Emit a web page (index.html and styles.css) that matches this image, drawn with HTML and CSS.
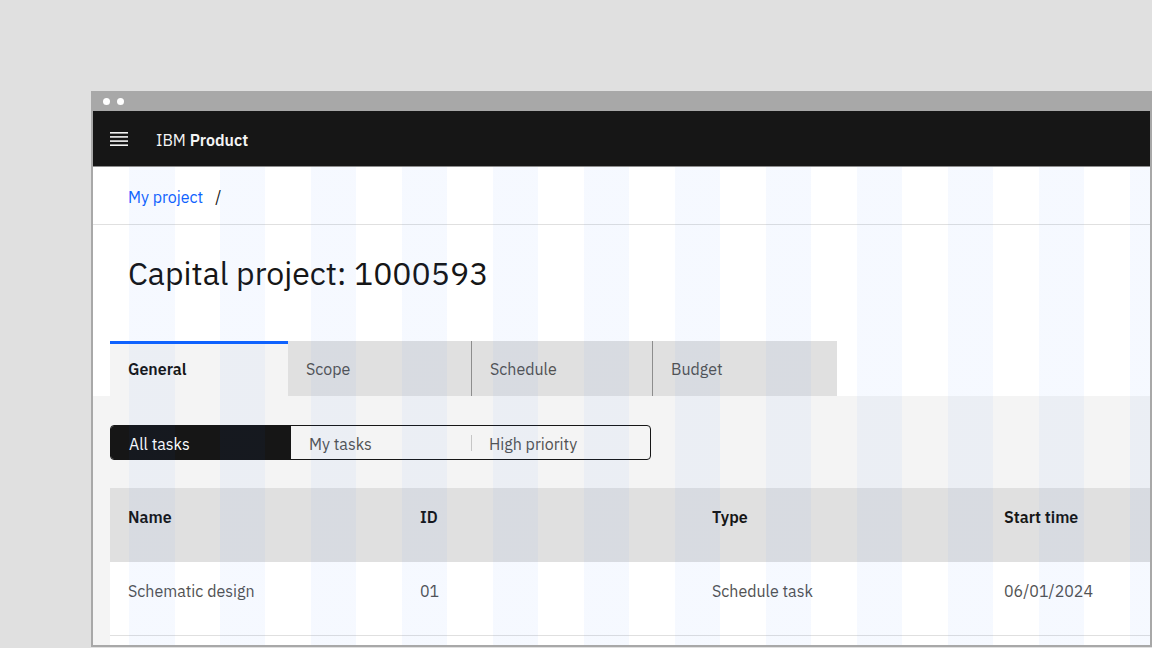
FILE: index.html
```html
<!DOCTYPE html>
<html lang="en">
<head>
    <meta charset="UTF-8">
    <meta name="viewport" content="width=device-width, initial-scale=1.0">
    <title>IBM Product - Capital project</title>
    <link rel="stylesheet" href="styles.css">
</head>
<body>
    <div class="window">
        <div class="titlebar">
            <span class="dot"></span>
            <span class="dot"></span>
        </div>
        <div class="header">
            <svg class="menu-icon" width="18" height="14" viewBox="0 0 18 14">
                <rect x="0" y="0" width="18" height="1.6" fill="#f4f4f4"/>
                <rect x="0" y="4.1" width="18" height="1.6" fill="#f4f4f4"/>
                <rect x="0" y="8.3" width="18" height="1.6" fill="#f4f4f4"/>
                <rect x="0" y="12.4" width="18" height="1.6" fill="#f4f4f4"/>
            </svg>
            <span class="product">IBM <b>Product</b></span>
        </div>
        <div class="page">
            <div class="breadcrumb">
                <a href="#">My project</a>
                <span class="slash">/</span>
            </div>
            <div class="title-area">
                <h1>Capital project: 1000593</h1>
            </div>
            <div class="tabs">
                <div class="tab selected">General</div>
                <div class="tab scope">Scope</div>
                <div class="tab schedule">Schedule</div>
                <div class="tab budget">Budget</div>
            </div>
            <div class="content">
                <div class="switcher">
                    <div class="segment active">All tasks</div>
                    <div class="segment">My tasks</div>
                    <div class="segment divided">High priority</div>
                </div>
                <div class="table">
                    <div class="row head">
                        <div>Name</div>
                        <div>ID</div>
                        <div>Type</div>
                        <div>Start time</div>
                    </div>
                    <div class="row">
                        <div>Schematic design</div>
                        <div>01</div>
                        <div>Schedule task</div>
                        <div>06/01/2024</div>
                    </div>
                    <div class="row"></div>
                </div>
            </div>
            <!-- 2x grid overlay -->
            <div class="grid-overlay"></div>
        </div>
    </div>
</body>
</html>
```

FILE: styles.css
```css
* {
    margin: 0;
    padding: 0;
    box-sizing: border-box;
}
html, body {
    height: 100%;
    overflow: hidden;
}
body {
    font-family: 'IBM Plex Sans', 'Noto Sans', sans-serif;
    background-color: #e0e0e0;
    color: #161616;
    padding: 91px 0 0 91px;
}
.window {
    width: 1061px;
    height: 556px;
    border: 2px solid #a8a8a8;
    border-top: 0;
    background: white;
    overflow: hidden;
}
.titlebar {
    height: 20px;
    background-color: #a8a8a8;
    display: flex;
    align-items: center;
    gap: 7px;
    padding-left: 10px;
}
.dot {
    width: 7px;
    height: 7px;
    border-radius: 50%;
    background: white;
}
.header {
    height: 56px;
    background-color: #161616;
    border-bottom: 1px solid #8d8d8d;
    display: flex;
    align-items: center;
    padding-left: 17px;
    color: #f4f4f4;
    font-size: 16px;
}
.menu-icon {
    display: block;
    margin-right: 28px;
}
.product {
    padding-top: 2px;
}
.product b {
    font-weight: 600;
}
.page {
    position: relative;
}
.breadcrumb {
    height: 58px;
    border-bottom: 1px solid #e0e0e0;
    display: flex;
    align-items: center;
    padding: 2px 0 0 35px;
    font-size: 16px;
}
.breadcrumb a {
    color: #0f62fe;
    text-decoration: none;
}
.slash {
    margin-left: 12px;
    color: #161616;
}
.title-area {
    height: 116px;
    padding: 28px 0 0 35px;
}
.title-area h1 {
    font-size: 32px;
    font-weight: 400;
    line-height: 40px;
}
.tabs {
    display: flex;
    height: 55px;
    margin-left: 17px;
}
.tab {
    display: flex;
    align-items: center;
    padding-left: 18px;
    background-color: #e0e0e0;
    color: #525252;
    font-size: 16px;
}
.tab.selected {
    width: 178px;
    background-color: #f4f4f4;
    border-top: 3px solid #0f62fe;
    padding-bottom: 3px;
    color: #161616;
    font-weight: 600;
}
.tab.scope {
    width: 183px;
}
.tab.schedule {
    width: 181px;
    border-left: 1px solid #8d8d8d;
}
.tab.budget {
    width: 185px;
    border-left: 1px solid #8d8d8d;
}
.content {
    background-color: #f4f4f4;
    padding: 29px 0 0 17px;
    height: 300px;
}
.switcher {
    display: flex;
    width: 541px;
    height: 35px;
    border: 1px solid #161616;
    border-radius: 4px;
    overflow: hidden;
    font-size: 16px;
    color: #525252;
}
.segment {
    width: 180px;
    display: flex;
    align-items: center;
    padding: 2px 0 0 18px;
    position: relative;
}
.segment.active {
    background-color: #161616;
    color: white;
}
.segment.divided {
    flex: 1;
}
.segment.divided::before {
    content: "";
    position: absolute;
    left: 0;
    top: 9px;
    height: 16px;
    border-left: 1px solid #c6c6c6;
}
.table {
    margin-top: 28px;
    background: white;
    font-size: 16px;
}
.row {
    display: grid;
    grid-template-columns: repeat(4, 292px);
    height: 74px;
    align-items: start;
    padding-top: 18px;
    line-height: 22px;
    border-bottom: 1px solid #e0e0e0;
    color: #525252;
}
.row div {
    padding-left: 18px;
    white-space: nowrap;
}
.row.head {
    background-color: #e0e0e0;
    color: #161616;
    font-weight: 600;
    border-bottom: 0;
}
.grid-overlay {
    position: absolute;
    top: 0;
    bottom: 0;
    left: 35.5px;
    right: 0;
    pointer-events: none;
    background: repeating-linear-gradient(90deg,
        rgba(15, 98, 254, 0.04) 0 45.5px,
        transparent 45.5px 91px);
}
```
